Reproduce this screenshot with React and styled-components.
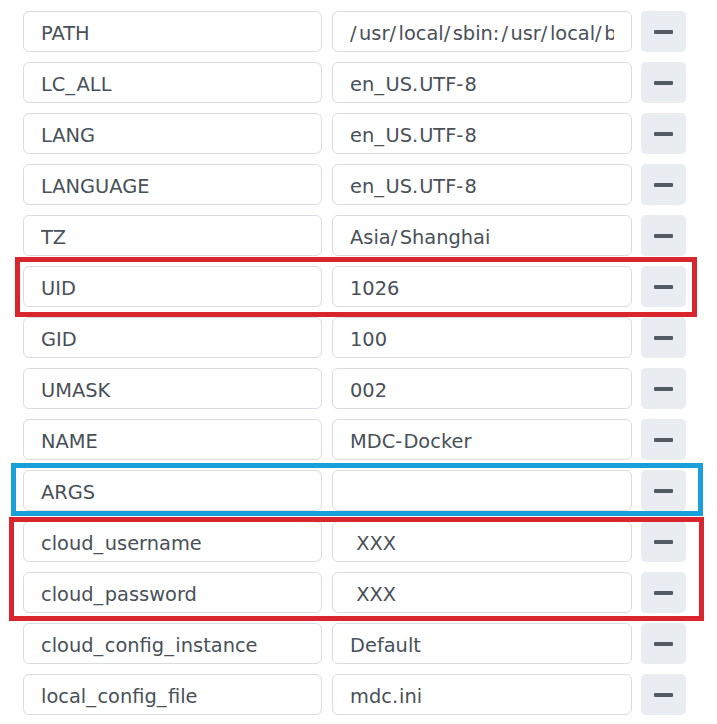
import React from 'react'
import styled, { createGlobalStyle } from 'styled-components';

const GlobalStyle = createGlobalStyle`
  html, body {
    margin: 0;
    padding: 0;
    background: #ffffff;
  }
`;

const Page = styled.div`
  position: relative;
  width: 717px;
  height: 724px;
  box-sizing: border-box;
  padding: 11px 0 0 23px;
  font-family: "DejaVu Sans", Verdana, sans-serif;
`;

const Grid = styled.div`
  display: grid;
  grid-template-columns: 299px 300px 44px;
  grid-auto-rows: 41px;
  column-gap: 10px;
  row-gap: 10px;
  > :nth-child(3n) {
    margin-left: -1px;
  }
`;

const Field = styled.div`
  display: flex;
  align-items: center;
  box-sizing: border-box;
  padding: 3px 17px 0 17px;
  border: 1px solid #dadce0;
  border-radius: 6px;
  background: #fff;
  color: #495057;
  font-size: 19.4px;
  > span {
    flex: 1;
    white-space: pre;
    overflow: hidden;
  }
`;

// punctuation is a touch wider in the original UI font
const Punct = styled.span`
  letter-spacing: ${p => p.extra}px;
`;

const extraWidth = { '_': 1.5, '/': 2.5, ':': 2, '.': 1, '-': 1.2 };

const Text = ({ children }) =>
  children.split('').map((ch, i) =>
    extraWidth[ch] ? <Punct key={i} extra={extraWidth[ch]}>{ch}</Punct> : ch
  );

const RemoveButton = styled.div`
  display: flex;
  align-items: center;
  justify-content: center;
  background: #e9ecf1;
  border-radius: 5px;
  > span {
    width: 19px;
    height: 4px;
    border-radius: 1px;
    background: #555b63;
  }
`;

const Mark = styled.div`
  position: absolute;
  box-sizing: border-box;
  border: 5px solid ${p => p.color};
  left: ${p => p.x}px;
  top: ${p => p.y}px;
  width: ${p => p.w}px;
  height: ${p => p.h}px;
  pointer-events: none;
`;

const rows = [
  ['PATH', '/usr/local/sbin:/usr/local/bin:/usr/sbin:/usr/bin'],
  ['LC_ALL', 'en_US.UTF-8'],
  ['LANG', 'en_US.UTF-8'],
  ['LANGUAGE', 'en_US.UTF-8'],
  ['TZ', 'Asia/Shanghai'],
  ['UID', '1026'],
  ['GID', '100'],
  ['UMASK', '002'],
  ['NAME', 'MDC-Docker'],
  ['ARGS', ''],
  ['cloud_username', ' XXX'],
  ['cloud_password', ' XXX'],
  ['cloud_config_instance', 'Default'],
  ['local_config_file', 'mdc.ini'],
];

const App = () => {
  return (
    <Page>
      <GlobalStyle />
      <Grid>
        {rows.map(([key, value]) => (
          <React.Fragment key={key}>
            <Field><span><Text>{key}</Text></span></Field>
            <Field><span><Text>{value}</Text></span></Field>
            <RemoveButton><span /></RemoveButton>
          </React.Fragment>
        ))}
      </Grid>
      <Mark color="#d9252e" x={15} y={257} w={682} h={60} />
      <Mark color="#19a0db" x={11} y={463} w={692} h={53} />
      <Mark color="#d9252e" x={9} y={517} w={695} h={104} />
    </Page>
  )
}

export default App
